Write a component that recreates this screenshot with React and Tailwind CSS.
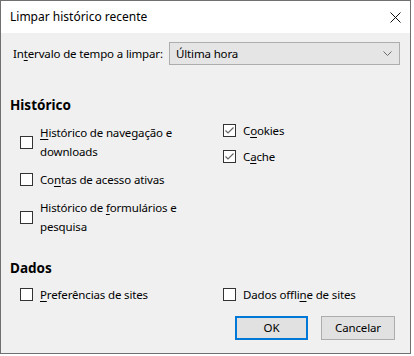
import React from "react";

const Box = ({ checked }) => (
  <span className="w-[13px] h-[13px] shrink-0 border border-[#333333] bg-white flex items-center justify-center">
    {checked && (
      <svg width="11" height="11" viewBox="0 0 11 11">
        <path d="M1.5 5.5 L4 8 L9.5 2.5" stroke="#666666" strokeWidth="1.2" fill="none" />
      </svg>
    )}
  </span>
);

const Item = ({ checked, children }) => (
  <div className="flex items-center gap-[7px]">
    <Box checked={checked} />
    <span className="leading-[19px] whitespace-nowrap">{children}</span>
  </div>
);

const U = ({ children }) => <span className="underline underline-offset-2">{children}</span>;

export default function App() {
  return (
    <div
      className="w-[414px] h-[356px] bg-white text-[11.5px] tracking-[-0.15px] text-black"
      style={{ fontFamily: '"Noto Sans", sans-serif' }}
    >
      <div className="w-[411px] h-[354px] border border-[#707070] flex flex-col">
        {/* barra de título */}
        <div className="h-[32px] bg-white flex items-center justify-between pl-[9px] pr-[9px]">
          <span className="text-[12px] tracking-normal">Limpar histórico recente</span>
          <svg width="11" height="11" viewBox="0 0 11 11">
            <path d="M0.5 0.5 L10.5 10.5 M10.5 0.5 L0.5 10.5" stroke="#111111" strokeWidth="1" />
          </svg>
        </div>

        <div className="flex-1 bg-[#f0f0f0] px-[9px]">
          <div className="mt-[9px] flex items-center justify-between pl-[3px] pr-[1px]">
            <span className="whitespace-nowrap">
              In<U>t</U>ervalo de tempo a limpar:
            </span>
            <div className="w-[231px] h-[23px] shrink-0 border border-[#adadad] bg-[#e5e5e5] flex items-center justify-between pl-[6px] pr-[7px]">
              <span>Última hora</span>
              <svg width="9" height="5" viewBox="0 0 9 5">
                <path d="M0.5 0.5 L4.5 4.5 L8.5 0.5" stroke="#6b6b6b" fill="none" />
              </svg>
            </div>
          </div>

          <h2 className="mt-[30px] text-[13.5px] tracking-normal font-bold leading-[20px]">Histórico</h2>

          <div className="mt-[8px] pl-[10px] grid grid-cols-[203px_1fr]">
            <div className="flex flex-col gap-[9px]">
              <Item>
                <U>H</U>istórico de navegação e
                <br />
                downloads
              </Item>
              <Item>
                Co<U>n</U>tas de acesso ativas
              </Item>
              <Item>
                Histórico de <U>f</U>ormulários e
                <br />
                pesquisa
              </Item>
            </div>
            <div className="flex flex-col gap-[7px] -mt-[2px]">
              <Item checked>
                C<U>o</U>okies
              </Item>
              <Item checked>
                C<U>a</U>che
              </Item>
            </div>
          </div>

          <h2 className="mt-[22px] text-[13.5px] tracking-normal font-bold leading-[20px]">Dados</h2>

          <div className="mt-[7px] pl-[10px] grid grid-cols-[203px_1fr]">
            <Item>
              <U>P</U>referências de sites
            </Item>
            <Item>
              Dados offli<U>n</U>e de sites
            </Item>
          </div>

          <div className="mt-[12px] flex justify-end gap-[13px] pr-[6px]">
            <button className="w-[73px] h-[24px] border-2 border-[#0078d7] bg-[#e1e1e1]">OK</button>
            <button className="w-[74px] h-[24px] border border-[#adadad] bg-[#e1e1e1]">Cancelar</button>
          </div>
        </div>
      </div>
    </div>
  );
}
